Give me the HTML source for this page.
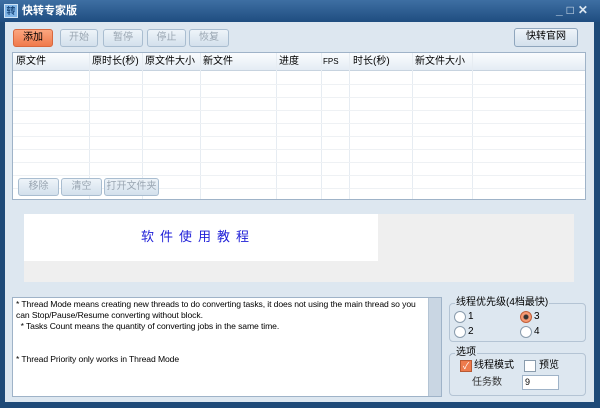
<!DOCTYPE html>
<html><head><meta charset="utf-8"><style>
*{box-sizing:border-box;margin:0;padding:0}
body{width:600px;height:408px;overflow:hidden;background:#1e4a78;font-family:"Liberation Sans","Noto Sans CJK SC",sans-serif;font-size:10px;color:#000;position:relative}
.a{position:absolute}
.title{left:0;top:0;width:600px;height:22px;background:linear-gradient(#3e6fa3,#1f4d80);color:#fff;font-weight:bold;font-size:11px}
.client{left:5px;top:22px;width:589px;height:380px;background:#dde7f0}
.btn{position:absolute;height:18px;border:1px solid #a9bdd0;border-radius:3px;background:linear-gradient(#eef4f9,#d3e0ec);color:#9aa6b2;text-align:center;line-height:16px;font-size:10px;white-space:nowrap}
.tbl{left:12px;top:52px;width:574px;height:148px;background:#fff;border:1px solid #9fb3c8}
.hd{position:absolute;left:0;top:0;width:100%;height:18px;background:linear-gradient(#fafcfe,#e4ecf4);border-bottom:1px solid #c7d3df}
.hd span{position:absolute;top:2px;font-size:10px;line-height:14px;white-space:nowrap}
.vl{position:absolute;top:0;width:1px;height:146px;background:#e6ecf2}
.hl{position:absolute;left:0;width:100%;height:1px;background:#eef1f4}
.grp{position:absolute;border:1px solid #b4c4d4;border-radius:4px}
.grp .lg{position:absolute;top:-8px;left:5px;background:#dde7f0;padding:0 1px;font-size:10px;line-height:14px;white-space:nowrap}
.rad{position:absolute;width:12px;height:12px;border-radius:50%;border:1px solid #8a9cad;background:#fff}
.lb{position:absolute;font-size:10px;line-height:12px}
</style></head><body>
<div class="a title">
 <div class="a" style="left:4px;top:4px;width:14px;height:14px;background:#7fb4e6;border:1px solid #cfe3f5;font-size:9px;line-height:12px;text-align:center;color:#1b4b80">转</div>
 <div class="a" style="left:22px;top:4px;line-height:14px">快转专家版</div>
 <div class="a" style="left:556px;top:3px;font-size:12px;color:#dbe6f0;letter-spacing:4px">_□✕</div>
</div>
<div class="a client"></div>
<div class="btn" style="left:13px;top:29px;width:40px;background:linear-gradient(#fba67f,#f07a4c);border-color:#d8683e;color:#000">添加</div>
<div class="btn" style="left:60px;top:29px;width:38px">开始</div>
<div class="btn" style="left:103px;top:29px;width:40px">暂停</div>
<div class="btn" style="left:147px;top:29px;width:39px">停止</div>
<div class="btn" style="left:189px;top:29px;width:40px">恢复</div>
<div class="btn" style="left:514px;top:28px;width:64px;height:19px;color:#000;border-color:#8fa6bd">快转官网</div>
<div class="a tbl">
 <div class="hd">
  <span style="left:3px">原文件</span><span style="left:79px">原时长(秒)</span><span style="left:132px">原文件大小</span><span style="left:190px">新文件</span><span style="left:266px">进度</span><span style="left:310px;font-size:8px">FPS</span><span style="left:340px">时长(秒)</span><span style="left:402px">新文件大小</span>
 </div>
 <div class="vl" style="left:76px"></div><div class="vl" style="left:129px"></div><div class="vl" style="left:187px"></div><div class="vl" style="left:263px"></div><div class="vl" style="left:308px"></div><div class="vl" style="left:336px"></div><div class="vl" style="left:399px"></div><div class="vl" style="left:459px"></div>
 <div class="hl" style="top:31px"></div><div class="hl" style="top:44px"></div><div class="hl" style="top:57px"></div><div class="hl" style="top:70px"></div><div class="hl" style="top:83px"></div><div class="hl" style="top:96px"></div><div class="hl" style="top:109px"></div><div class="hl" style="top:122px"></div><div class="hl" style="top:135px"></div>
 <div class="btn" style="left:5px;top:125px;width:41px">移除</div>
 <div class="btn" style="left:48px;top:125px;width:41px">清空</div>
 <div class="btn" style="left:91px;top:125px;width:55px">打开文件夹</div>
</div>
<div class="a" style="left:24px;top:214px;width:550px;height:68px;background:#efefef"></div>
<div class="a" style="left:24px;top:214px;width:354px;height:47px;background:#fff"></div>
<div class="a" style="left:141px;top:228px;color:#2020d8;font-size:13px;letter-spacing:6px;line-height:18px;white-space:nowrap">软件使用教程</div>
<div class="a" style="left:12px;top:297px;width:430px;height:100px;background:#fff;border:1px solid #9fb3c8;font-size:8.6px;line-height:11px;padding:1px 2px 0 3px;letter-spacing:-0.1px">
 <div style="width:412px">* Thread Mode means creating new threads to do converting tasks, it does not using the main thread so you can Stop/Pause/Resume converting without block.</div>
 <div>&nbsp; * Tasks Count means the quantity of converting jobs in the same time.</div>
 <div style="margin-top:22px">* Thread Priority only works in Thread Mode</div>
 <div class="a" style="left:415px;top:0;width:13px;height:98px;background:#c9d6e3;border-left:1px solid #b4c4d4"></div>
</div>
<div class="grp" style="left:449px;top:303px;width:137px;height:39px"><span class="lg">线程优先级(4档最快)</span></div>
<div class="rad" style="left:454px;top:311px"></div><div class="lb" style="left:468px;top:311px">1</div>
<div class="rad" style="left:520px;top:311px;border-color:#c0603a;background:radial-gradient(#333 0 2px,#f59a74 3px)"></div><div class="lb" style="left:534px;top:311px">3</div>
<div class="rad" style="left:454px;top:326px"></div><div class="lb" style="left:468px;top:326px">2</div>
<div class="rad" style="left:520px;top:326px"></div><div class="lb" style="left:534px;top:326px">4</div>
<div class="grp" style="left:449px;top:353px;width:137px;height:43px"><span class="lg">选项</span></div>
<div class="a" style="left:460px;top:360px;width:12px;height:12px;background:#ee7b4d;border:1px solid #b85a34;color:#fff;font-size:9px;line-height:10px;text-align:center">✓</div>
<div class="lb" style="left:474px;top:360px">线程模式</div>
<div class="a" style="left:524px;top:360px;width:12px;height:12px;background:#fff;border:1px solid #8a9cad"></div>
<div class="lb" style="left:539px;top:360px">预览</div>
<div class="lb" style="left:472px;top:377px;color:#333">任务数</div>
<div class="a" style="left:522px;top:375px;width:37px;height:15px;background:#fff;border:1px solid #9fb3c8;font-size:9px;padding-left:2px;line-height:13px">9</div>
</body></html>
